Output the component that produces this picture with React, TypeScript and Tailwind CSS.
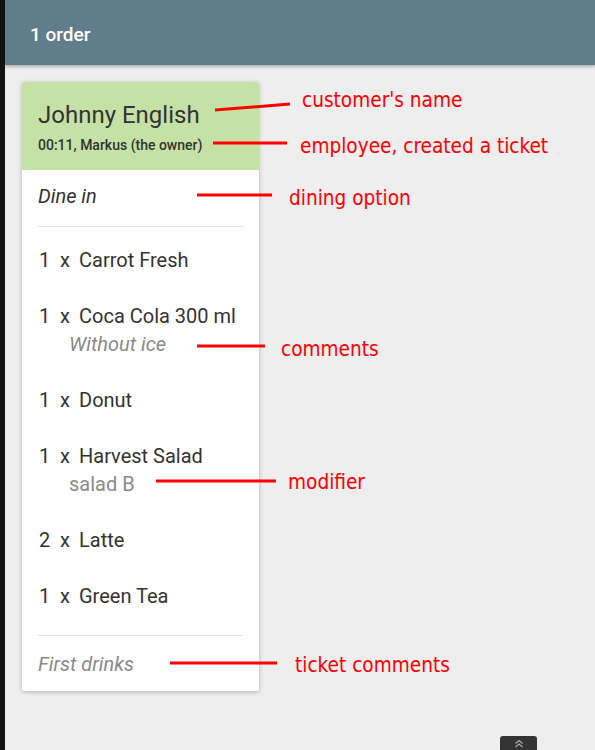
import React from "react";

const roboto = { fontFamily: "Roboto, 'Noto Sans', sans-serif" } as const;
const anno = { fontFamily: "'DejaVu Sans Condensed', 'DejaVu Sans', sans-serif" } as const;

type Item = { qty: number; name: string; sub?: string; subItalic?: boolean };

const items: Item[] = [
  { qty: 1, name: "Carrot Fresh" },
  { qty: 1, name: "Coca Cola 300 ml", sub: "Without ice", subItalic: true },
  { qty: 1, name: "Donut" },
  { qty: 1, name: "Harvest Salad", sub: "salad B" },
  { qty: 2, name: "Latte" },
  { qty: 1, name: "Green Tea" },
];

function ItemRow({ item }: { item: Item }) {
  return (
    <div className="py-[16px]">
      <div className="flex h-[24px] items-center pl-[1px] text-[20px] leading-[24px] text-[#333333]">
        <span className="w-[21px]">{item.qty}</span>
        <span className="w-[19px]">x</span>
        <span>{item.name}</span>
      </div>
      {item.sub && (
        <div
          className={`h-[28px] pt-[4px] pl-[31px] text-[20px] leading-[24px] text-[#8a8a8a] ${
            item.subItalic ? "italic" : ""
          }`}
        >
          {item.sub}
        </div>
      )}
    </div>
  );
}

function Annotation({
  x1,
  y1,
  x2,
  y2,
  tx,
  ty,
  text,
}: {
  x1: number;
  y1: number;
  x2: number;
  y2: number;
  tx: number;
  ty: number;
  text: string;
}) {
  return (
    <>
      <svg className="absolute left-0 top-0 pointer-events-none" width={595} height={750}>
        <line x1={x1} y1={y1} x2={x2} y2={y2} stroke="#ff0000" strokeWidth={3} />
      </svg>
      <div
        className="absolute whitespace-nowrap text-[20.6px] leading-[24px] text-[#ff0000]"
        style={{ ...anno, left: tx, top: ty - 12 }}
      >
        {text}
      </div>
    </>
  );
}

export default function App() {
  return (
    <div className="relative flex h-[750px] w-[595px] overflow-hidden bg-[#eeeeee]" style={roboto}>
      <div className="w-[5px] shrink-0 bg-[#121212]" />
      <div className="flex flex-1 flex-col">
        <div className="relative z-10 flex h-[65px] shrink-0 items-center bg-[#607d8b] px-[25px] pt-[6px] shadow-[0_2px_3px_rgba(0,0,0,0.25)]">
          <span className="text-[19px] font-medium text-white">1 order</span>
        </div>
        <div className="pl-[17px] pt-[17px]">
          <div className="w-[237px] rounded-[2px] bg-white shadow-[0_1px_4px_rgba(0,0,0,0.25)]">
            <div className="h-[88px] rounded-t-[2px] bg-[#c5e1a5] px-[16px] pt-[18px]">
              <div className="text-[24px] leading-[30px] text-[#333333]">Johnny English</div>
              <div className="mt-[6px] text-[14px] font-medium leading-[18px] text-[#333333]">
                00:11, Markus (the owner)
              </div>
            </div>
            <div className="px-[16px]">
              <div className="flex h-[56px] items-center pb-[4px] text-[20px] italic text-[#333333]">Dine in</div>
              <div className="h-px bg-[#e4e4e4]" />
              <div className="pt-[5px]">
                {items.map((it, i) => (
                  <ItemRow key={i} item={it} />
                ))}
              </div>
              <div className="mt-[11px] h-px bg-[#e4e4e4]" />
              <div className="flex h-[55px] items-center text-[20px] italic text-[#8a8a8a]">First drinks</div>
            </div>
          </div>
        </div>
      </div>

      <Annotation x1={215} y1={110} x2={290} y2={104} tx={302} ty={100} text="customer's name" />
      <Annotation x1={213} y1={143} x2={287} y2={143} tx={300} ty={146} text="employee, created a ticket" />
      <Annotation x1={197} y1={195} x2={272} y2={195} tx={289} ty={198} text="dining option" />
      <Annotation x1={197} y1={346} x2={265} y2={346} tx={281} ty={349} text="comments" />
      <Annotation x1={156} y1={481} x2={276} y2={481} tx={288} ty={482} text="modifier" />
      <Annotation x1={170} y1={663} x2={277} y2={663} tx={295} ty={665} text="ticket comments" />

      <div className="absolute bottom-0 left-[500px] flex h-[14px] w-[37px] items-start justify-center rounded-t-[3px] bg-[#333333] pt-[3px]">
        <svg width="10" height="9" viewBox="0 0 10 9" fill="none" stroke="#aaaaaa" strokeWidth="1.3">
          <path d="M1.5 4.5 L5 1.5 L8.5 4.5" />
          <path d="M1.5 8 L5 5 L8.5 8" />
        </svg>
      </div>
    </div>
  );
}
